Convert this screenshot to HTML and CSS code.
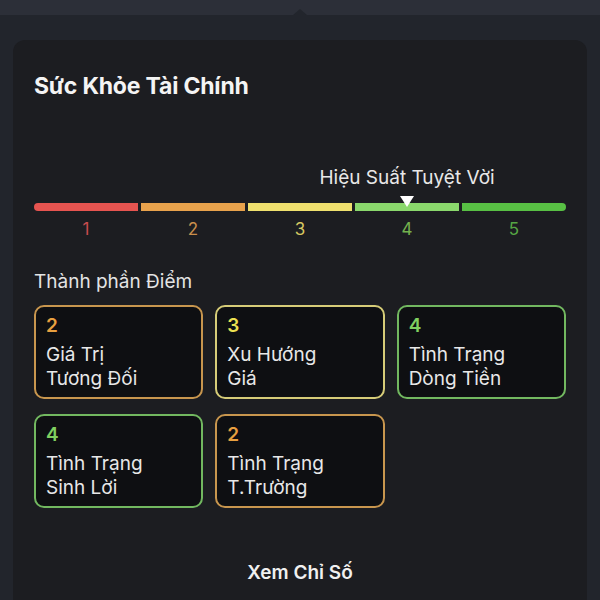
FILE: index.html
```html
<!DOCTYPE html>
<html lang="vi">
<head>
    <meta charset="UTF-8">
    <meta name="viewport" content="width=device-width, initial-scale=1.0">
    <title>Sức Khỏe Tài Chính</title>
    <link rel="stylesheet" href="styles.css">
</head>

<body>

    <div class="topbar"></div>

    <div class="sheet">
        <h1 class="title">Sức Khỏe Tài Chính</h1>

        <div class="meter">
            <div class="meter-label"><span>Hiệu Suất Tuyệt Vời</span></div>

            <div class="seg seg-1"></div>
            <div class="seg seg-2"></div>
            <div class="seg seg-3"></div>
            <div class="seg seg-4"><span class="marker"></span></div>
            <div class="seg seg-5"></div>

            <div class="num num-1">1</div>
            <div class="num num-2">2</div>
            <div class="num num-3">3</div>
            <div class="num num-4">4</div>
            <div class="num num-5">5</div>
        </div>

        <h2 class="section">Thành phần Điểm</h2>

        <div class="tiles">
            <div class="tile tile-orange">
                <div class="score">2</div>
                <div class="name">Giá Trị<br>Tương Đối</div>
            </div>
            <div class="tile tile-yellow">
                <div class="score">3</div>
                <div class="name">Xu Hướng<br>Giá</div>
            </div>
            <div class="tile tile-green">
                <div class="score">4</div>
                <div class="name">Tình Trạng<br>Dòng Tiền</div>
            </div>
            <div class="tile tile-green">
                <div class="score">4</div>
                <div class="name">Tình Trạng<br>Sinh Lời</div>
            </div>
            <div class="tile tile-orange">
                <div class="score">2</div>
                <div class="name">Tình Trạng<br>T.Trường</div>
            </div>
        </div>

        <button class="more" type="button">Xem Chỉ Số</button>
    </div>

</body>
</html>
```

FILE: styles.css
```css
body {
    font-family: Inter, "Noto Sans", Arial, sans-serif;
    margin: 0;
    padding: 0;
    height: 100vh;
    background-color: #22252c;
    color: #e6e6e6;
    overflow: hidden;
}

.topbar {
    height: 15px;
    background-color: #2c2f38;
    position: relative;
}

.topbar::after {
    content: "";
    position: absolute;
    left: 293px;
    bottom: 0;
    border-left: 7px solid transparent;
    border-right: 7px solid transparent;
    border-bottom: 6px solid #22252c;
}

.sheet {
    box-sizing: border-box;
    height: calc(100vh - 40px);
    margin: 25px 13px 0;
    padding: 32px 21px 0;
    background-color: #1c1d21;
    border-radius: 12px 12px 0 0;
}

.title {
    margin: 0;
    font-size: 23px;
    line-height: 28px;
    font-weight: 700;
    color: #f4f4f4;
    letter-spacing: -0.2px;
}

.meter {
    display: grid;
    grid-template-columns: repeat(5, minmax(0, 1fr));
    column-gap: 3px;
    margin-top: 67px;
}

.meter-label {
    grid-column: 4;
    grid-row: 1;
    display: flex;
    justify-content: center;
    font-size: 19px;
    line-height: 22px;
    color: #e8e8e8;
    white-space: nowrap;
    margin-bottom: 14px;
}

.seg {
    grid-row: 2;
    height: 8px;
    position: relative;
}

.seg-1 { background-color: #e65450; border-radius: 4px 0 0 4px; }
.seg-2 { background-color: #e8a24c; }
.seg-3 { background-color: #efe06e; }
.seg-4 { background-color: #8ad86c; }
.seg-5 { background-color: #58c044; border-radius: 0 4px 4px 0; }

.marker {
    position: absolute;
    left: 50%;
    top: -7px;
    margin-left: -7px;
    border-left: 7px solid transparent;
    border-right: 7px solid transparent;
    border-top: 11px solid #ffffff;
}

.num {
    grid-row: 3;
    text-align: center;
    font-size: 17px;
    line-height: 20px;
    margin-top: 8px;
}

.num-1 { color: #c84c4e; }
.num-2 { color: #c98e4c; }
.num-3 { color: #d6c862; }
.num-4 { color: #74b24e; }
.num-5 { color: #56a644; }

.section {
    margin: 32px 0 0;
    font-size: 19px;
    line-height: 22px;
    font-weight: 400;
    color: #e4e4e4;
}

.tiles {
    display: grid;
    grid-template-columns: repeat(3, minmax(0, 1fr));
    gap: 15px 12px;
    margin-top: 12px;
}

.tile {
    height: 94px;
    box-sizing: border-box;
    padding: 7px 10px;
    background-color: #0e0f12;
    border: 2px solid #c99a50;
    border-radius: 10px;
}

.score {
    font-size: 19px;
    line-height: 24px;
    font-weight: 600;
    margin-bottom: 5px;
}

.name {
    font-size: 19px;
    line-height: 24px;
    color: #e8e8e8;
}

.tile-orange { border-color: #c8964e; }
.tile-orange .score { color: #e8a040; }

.tile-yellow { border-color: #d6cc78; }
.tile-yellow .score { color: #ece052; }

.tile-green { border-color: #72b860; }
.tile-green .score { color: #80d060; }

.more {
    display: block;
    margin: 54px auto 0;
    padding: 0;
    border: none;
    background: none;
    font-family: inherit;
    font-size: 19px;
    line-height: 22px;
    font-weight: 600;
    color: #f0f0f0;
    cursor: pointer;
}
```
